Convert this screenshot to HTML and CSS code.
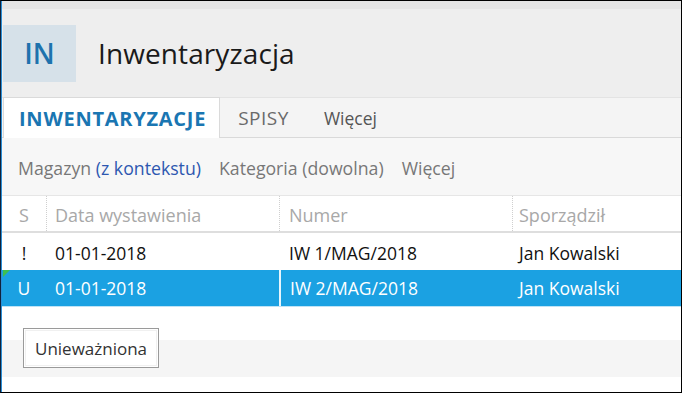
FILE: index.html
```html
<!DOCTYPE html>
<html lang="pl">
<head>
    <meta charset="UTF-8">
    <title>Inwentaryzacja</title>
    <link rel="stylesheet" href="styles.css">
</head>
<body>
<div class="frame">
    <div class="strip"></div>
    <div class="header">
        <div class="badge">IN</div>
        <h1>Inwentaryzacja</h1>
    </div>
    <ul class="tabs">
        <li class="active">INWENTARYZACJE</li>
        <li class="caps">SPISY</li>
        <li>Więcej</li>
    </ul>
    <div class="filters">
        <span>Magazyn <em>(z kontekstu)</em></span>
        <span>Kategoria (dowolna)</span>
        <span>Więcej</span>
    </div>
    <div class="grid">
        <div class="row head">
            <div class="c s">S</div>
            <div class="c">Data wystawienia</div>
            <div class="c">Numer</div>
            <div class="c">Sporządził</div>
        </div>
        <div class="row first">
            <div class="c s">!</div>
            <div class="c">01-01-2018</div>
            <div class="c">IW 1/MAG/2018</div>
            <div class="c">Jan Kowalski</div>
        </div>
        <div class="row selected">
            <div class="c s">U</div>
            <div class="c">01-01-2018</div>
            <div class="c">IW 2/MAG/2018</div>
            <div class="c">Jan Kowalski</div>
        </div>
    </div>
    <div class="footer">
        <button class="btn">Unieważniona</button>
    </div>
</div>
</body>
</html>
```

FILE: styles.css
```css
* {
    margin: 0;
    padding: 0;
    box-sizing: border-box;
}
body {
    font-family: "Open Sans", "Noto Sans", sans-serif;
    background: #fff;
}
.frame {
    width: 682px;
    height: 393px;
    border: 1px solid #000;
    border-left: 1px solid #10223a;
    box-shadow: inset 1px 0 0 #2b8fd6;
    overflow: hidden;
    display: flex;
    flex-direction: column;
}
.strip {
    height: 8px;
    background: #e5e5e5;
    margin-left: 1px;
}
.header {
    height: 88px;
    background: #eeeeee;
    margin-left: 1px;
    display: flex;
    align-items: center;
    padding-left: 1px;
}
.badge {
    width: 73px;
    height: 57px;
    margin-top: 1px;
    background: #d6e1e9;
    color: #1e72ad;
    font-size: 28px;
    font-weight: 600;
    display: flex;
    align-items: center;
    justify-content: center;
    padding-bottom: 2px;
}
.header h1 {
    font-size: 28px;
    font-weight: normal;
    color: #1a1a1a;
    margin-left: 22px;
    letter-spacing: 0.1px;
}
.tabs {
    list-style-type: none;
    height: 41px;
    background: #f4f4f4;
    border-top: 1px solid #e3e3e3;
    border-bottom: 1px solid #d9d9d9;
    margin-left: 1px;
    display: flex;
    align-items: stretch;
    padding-left: 1px;
}
.tabs li {
    display: flex;
    align-items: center;
    font-size: 17.5px;
    color: #555;
    padding: 0 16px 0 18px;
}
.tabs li.caps {
    font-size: 19px;
    letter-spacing: 0.5px;
    color: #6a6a6a;
    padding-right: 17px;
}
.tabs li.active {
    background: #fff;
    border: 1px solid #dadada;
    border-bottom: none;
    margin-top: -1px;
    margin-bottom: -1px;
    font-size: 20px;
    font-weight: 700;
    letter-spacing: 0.75px;
    color: #1a76b2;
    padding: 0 13px 0 15px;
}
.filters {
    height: 58px;
    background: #f7f7f7;
    border-bottom: 1px solid #e6e6e6;
    margin-left: 1px;
    display: flex;
    align-items: center;
    gap: 18px;
    padding-left: 16px;
    padding-top: 2px;
    font-size: 17.7px;
    color: #777;
}
.filters em {
    font-style: normal;
    color: #2d57b0;
}
.grid {
    margin-left: 1px;
}
.row {
    display: grid;
    grid-template-columns: 44px 233px 233px 1fr;
    height: 37px;
    font-size: 17.5px;
    color: #111;
}
.row .c {
    display: flex;
    align-items: center;
    padding-left: 8px;
    border-left: 1px solid transparent;
}
.row .c.s {
    justify-content: center;
    padding-left: 0;
    border-left: none;
}
.row.head {
    height: 37px;
    border-bottom: 2px solid #dedede;
    color: #a8a8a8;
    font-size: 18px;
}
.row.head .c,
.row.first .c {
    padding-top: 3px;
}
.row.head .c {
    border-left: 1px dotted #cfcfcf;
}
.row.head .c.s {
    border-left: none;
}
.row .c:nth-child(3) {
    padding-left: 9px;
}
.row .c:nth-child(4) {
    padding-left: 6px;
}
.row.selected {
    position: relative;
    height: 36px;
    background: #1ba1e2;
    color: #fff;
    box-shadow: 0 1px 0 #bfe3f6;
}
.row.selected .c:nth-child(3) {
    border-left: 2px solid #e8f5fc;
}
.row.selected::before {
    content: "";
    position: absolute;
    left: 1px;
    top: 0;
    border-top: 7px solid #3fbf4f;
    border-right: 7px solid transparent;
}
.footer {
    margin-left: 1px;
    margin-top: 34px;
    height: 37px;
    background: #f5f5f5;
}
.btn {
    display: block;
    margin: -12px 0 0 21px;
    height: 40px;
    padding: 0 11px;
    background: #fff;
    border: 1px solid #9a9a9a;
    box-shadow: inset 0 0 0 1px #fff, inset 0 0 0 2px #f0f0f0;
    font-family: "Open Sans", "Noto Sans", sans-serif;
    font-size: 17px;
    color: #333;
}
```
